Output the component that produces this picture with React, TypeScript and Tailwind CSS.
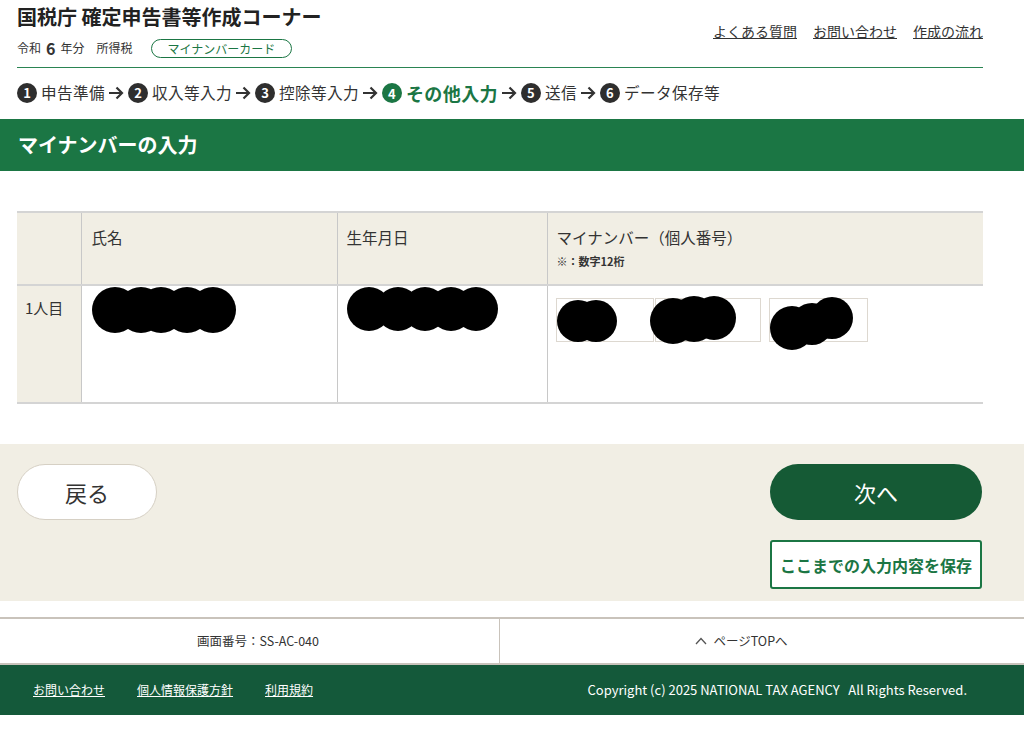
const font = { fontFamily: '"Noto Sans CJK JP", "Liberation Sans", sans-serif' };

const Step = ({ n, label, active }: { n: number; label: string; active?: boolean }) => (
  <span className={`flex items-center gap-[4px] ${active ? "text-[18px] font-bold text-[#1b7644]" : "text-[15.6px] text-[#333]"}`}>
    <span
      className={`flex h-[20px] w-[20px] items-center justify-center rounded-full text-[13px] font-bold leading-none text-white ${active ? "bg-[#1b7644]" : "bg-[#2e2e2e]"}`}
    >
      {n}
    </span>
    <span className="tracking-[0.4px]">{label}</span>
  </span>
);

const Arrow = () => (
  <svg className="ml-[3px] mr-[4px]" width="16" height="14" viewBox="0 0 16 14" fill="none" stroke="#333" strokeWidth="2.2">
    <path d="M1 7 H14 M8.5 1.5 L14 7 L8.5 12.5" />
  </svg>
);

const Blob = ({ cx, w, h }: { cx: number[]; w: number; h: number }) => (
  <svg width={w} height={h} viewBox={`0 0 ${w} ${h}`}>
    {cx.map((x, i) => (
      <circle key={i} cx={x} cy={h / 2} r={h / 2 - 1} fill="#000" />
    ))}
  </svg>
);

export default function App() {
  return (
    <div className="min-h-[747px] bg-white text-[#333]" style={font}>
      {/* header */}
      <div className="ml-[17px] w-[966px]">
        <div className="flex items-start justify-between">
          <div>
            <h1 className="pt-[3px] text-[20px] font-bold leading-[28px] text-[#222]">国税庁 確定申告書等作成コーナー</h1>
            <div className="mt-[7px] flex items-center text-[12px] leading-[20px]">
              <span>令和</span>
              <span className="mx-[5px] text-[16px] font-bold">6</span>
              <span>年分</span>
              <span className="ml-[12px]">所得税</span>
              <span className="ml-[18px] rounded-full border border-[#1b7644] px-[16px] text-[12px] leading-[17px] text-[#1b7644]">
                マイナンバーカード
              </span>
            </div>
          </div>
          <div className="mt-[20px] flex gap-[16px] text-[14px] leading-[22px]">
            <a className="underline">よくある質問</a>
            <a className="underline">お問い合わせ</a>
            <a className="underline">作成の流れ</a>
          </div>
        </div>
        <div className="mt-[9px] h-[1px] bg-[#2a8452]" />
        <div className="flex h-[51px] items-center pb-[1px]">
          <Step n={1} label="申告準備" />
          <Arrow />
          <Step n={2} label="収入等入力" />
          <Arrow />
          <Step n={3} label="控除等入力" />
          <Arrow />
          <Step n={4} label="その他入力" active />
          <Arrow />
          <Step n={5} label="送信" />
          <Arrow />
          <Step n={6} label="データ保存等" />
        </div>
      </div>

      {/* title band */}
      <div className="flex h-[52px] items-center bg-[#1b7644] pl-[18px] text-[20px] font-bold text-white">
        マイナンバーの入力
      </div>

      {/* table */}
      <div className="ml-[17px] mt-[40px] w-[966px]">
        <table className="w-full border-collapse text-[15.5px]">
          <thead>
            <tr className="h-[73px] border-y-2 border-[#d4d4d4] bg-[#f1eee4] align-top">
              <th className="w-[64px] border-r border-[#c8c8c8]" />
              <th className="w-[256px] border-r border-[#c8c8c8] px-[10px] pt-[13px] text-left font-normal">氏名</th>
              <th className="w-[210px] border-r border-[#c8c8c8] px-[9px] pt-[13px] text-left font-normal">生年月日</th>
              <th className="px-[9px] pt-[13px] text-left font-normal">
                <div className="leading-[22px]">マイナンバー（個人番号）</div>
                <div className="mt-[5px] text-[11px] font-bold leading-[16px]">※：数字12桁</div>
              </th>
            </tr>
          </thead>
          <tbody>
            <tr className="h-[118px] border-b-2 border-[#d4d4d4] align-top">
              <td className="border-r border-[#c8c8c8] bg-[#f1eee4] px-[8px] pt-[11px] text-[15px]">1人目</td>
              <td className="border-r border-[#c8c8c8] px-[7px]">
                <Blob cx={[26, 52, 72, 98, 124]} w={148} h={48} />
              </td>
              <td className="border-r border-[#c8c8c8] px-[8px]">
                <Blob cx={[23, 52, 79, 105, 130]} w={153} h={46} />
              </td>
              <td className="px-[8px] pt-[12px]">
                <div className="relative flex">
                  <div className="h-[44px] w-[98px] border border-[#ddd8d0]" />
                  <div className="ml-[1px] h-[44px] w-[106px] border border-[#ddd8d0]" />
                  <div className="ml-[8px] h-[44px] w-[99px] border border-[#ddd8d0]" />
                  <svg className="absolute left-0 top-[-4px]" width="320" height="56" viewBox="0 0 320 56">
                    <circle cx="22" cy="27" r="21" fill="#000" />
                    <circle cx="40" cy="27" r="21" fill="#000" />
                    <circle cx="117" cy="27" r="23" fill="#000" />
                    <circle cx="138" cy="25" r="23" fill="#000" />
                    <circle cx="158" cy="24" r="22" fill="#000" />
                    <circle cx="236" cy="34" r="22" fill="#000" />
                    <circle cx="256" cy="30" r="21" fill="#000" />
                    <circle cx="276" cy="24" r="21" fill="#000" />
                  </svg>
                </div>
              </td>
            </tr>
          </tbody>
        </table>
      </div>

      {/* actions */}
      <div className="mt-[40px] flex h-[157px] justify-between bg-[#f1eee4] pl-[17px] pr-[42px] pt-[20px]">
        <button className="h-[56px] w-[140px] rounded-full border border-[#d6d0c4] bg-white text-[22px] text-[#333]">
          戻る
        </button>
        <div className="flex flex-col gap-[20px]">
          <button className="h-[56px] w-[212px] rounded-full bg-[#155a35] text-[22px] text-white">次へ</button>
          <button className="h-[49px] w-[212px] rounded-[3px] border-2 border-[#1b7644] bg-white text-[16px] font-bold text-[#1b7644]">
            ここまでの入力内容を保存
          </button>
        </div>
      </div>

      {/* page footer */}
      <div className="mt-[16px] border-y-2 border-[#c9c3bb] text-[12.5px]">
        <div className="ml-[17px] flex h-[44px] w-[966px]">
          <div className="flex w-[483px] items-center justify-center border-r border-[#c9c3bb]">画面番号：SS-AC-040</div>
          <div className="flex flex-1 items-center justify-center gap-[6px]">
            <svg width="12" height="8" viewBox="0 0 12 8" fill="none" stroke="#555" strokeWidth="1.3">
              <path d="M1 7 L6 1.5 L11 7" />
            </svg>
            <span>ページTOPへ</span>
          </div>
        </div>
      </div>
      <div className="flex h-[50px] items-center justify-between bg-[#14593a] pl-[33px] pr-[57px] text-[12px] text-white">
        <div className="flex gap-[32px]">
          <a className="underline">お問い合わせ</a>
          <a className="underline">個人情報保護方針</a>
          <a className="underline">利用規約</a>
        </div>
        <div className="whitespace-pre text-[13px]">Copyright (c) 2025 NATIONAL TAX AGENCY   All Rights Reserved.</div>
      </div>
    </div>
  );
}
